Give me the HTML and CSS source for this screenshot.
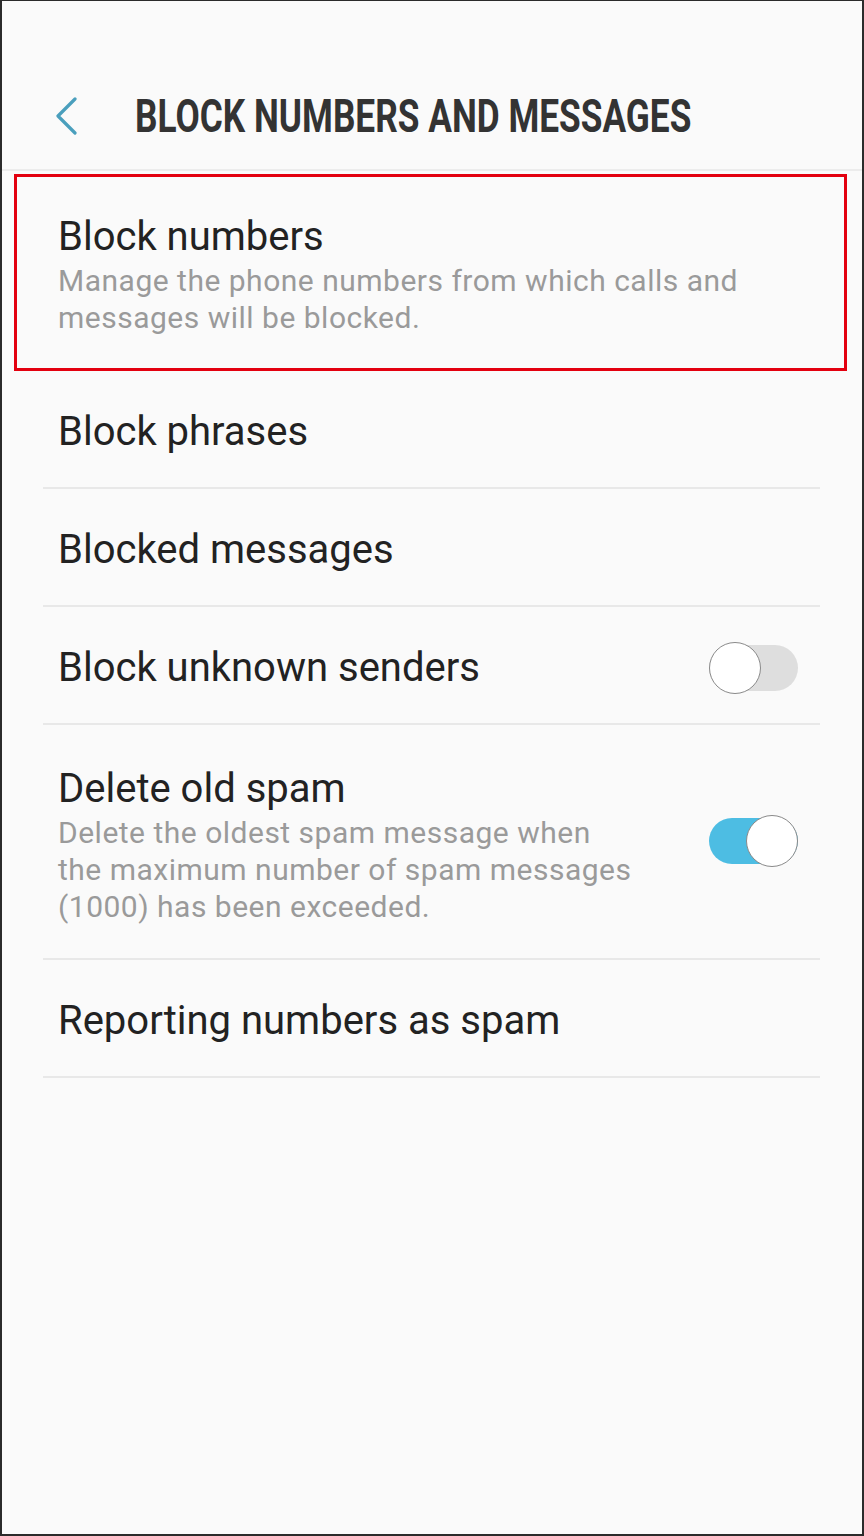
FILE: index.html
```html
<!DOCTYPE html>
<html lang="en">
<head>
  <meta charset="UTF-8">
  <meta name="viewport" content="width=device-width, initial-scale=1.0">
  <title>Block numbers and messages</title>
  <link rel="stylesheet" href="styles.css">
</head>
<body>
  <div class="screen">
    <div class="header">
      <span class="back">
        <svg width="24" height="38" viewBox="0 0 24 38">
          <polyline points="21,2 4,19 21,36" fill="none" stroke="#4a9fbd" stroke-width="3.2" stroke-linecap="round" stroke-linejoin="round"/>
        </svg>
      </span>
      <h1 class="title">BLOCK NUMBERS AND MESSAGES</h1>
    </div>

    <div class="highlight">
      <div class="item-title">Block numbers</div>
      <div class="item-sub">Manage the phone numbers from which calls and messages will be blocked.</div>
    </div>

    <ul class="list">
      <li class="item">
        <div class="item-title">Block phrases</div>
      </li>
      <li class="item">
        <div class="item-title">Blocked messages</div>
      </li>
      <li class="item">
        <div class="item-text">
          <div class="item-title">Block unknown senders</div>
        </div>
        <span class="switch"><span class="knob"></span></span>
      </li>
      <li class="item tall">
        <div class="item-text">
          <div class="item-title">Delete old spam</div>
          <div class="item-sub">Delete the oldest spam message when<br>the maximum number of spam messages (1000) has been exceeded.</div>
        </div>
        <span class="switch on"><span class="knob"></span></span>
      </li>
      <li class="item">
        <div class="item-title">Reporting numbers as spam</div>
      </li>
    </ul>
  </div>
</body>
</html>
```

FILE: styles.css
```css
*{
  margin: 0;
  padding: 0;
  box-sizing: border-box;
}
html,body{
  width: 100%;
  height: 100%;
}
body{
  background: #fafafa;
  font-family: Roboto, 'Noto Sans', sans-serif;
}
li{
  list-style: none;
}
.screen{
  height: 1536px;
  border: 2px solid #2b2b2b;
  border-top-width: 1px;
  background: #fafafa;
}
.header{
  height: 170px;
  display: flex;
  align-items: center;
  padding: 62px 0 0 52px;
  border-bottom: 2px solid #ececec;
}
.back{
  display: flex;
  width: 81px;
}
.title{
  font-family: Roboto, 'Noto Sans', sans-serif;
  font-weight: bold;
  font-size: 46px;
  color: #333;
  white-space: nowrap;
  transform: scaleX(0.766);
  transform-origin: left center;
}
.highlight{
  margin: 3px 15px 0 12px;
  border: 3px solid #e3000f;
  height: 197px;
  padding: 37px 0 0 41px;
}
.item-title{
  font-size: 40px;
  color: #222;
  line-height: 46px;
}
.item-sub{
  font-size: 30px;
  letter-spacing: 0.5px;
  color: #9a9a9a;
  line-height: 37px;
  margin-top: 2px;
}
.highlight .item-sub{
  width: 740px;
}
.list{
  margin: 0 42px 0 41px;
}
.item{
  height: 118px;
  display: flex;
  align-items: center;
  justify-content: space-between;
  padding: 6px 22px 0 15px;
  border-bottom: 2px solid #e8e8e8;
}
.item.tall{
  height: 235px;
  padding-top: 8px;
}
.tall .item-sub{
  width: 600px;
}
.switch{
  position: relative;
  width: 89px;
  height: 46px;
  border-radius: 23px;
  background: #dedede;
  flex-shrink: 0;
}
.switch .knob{
  position: absolute;
  top: -3px;
  left: 0;
  width: 52px;
  height: 52px;
  border-radius: 50%;
  background: #fff;
  border: 1.5px solid #8a8a8a;
}
.switch.on{
  background: #4dbde3;
  margin-bottom: 10px;
}
.switch.on .knob{
  left: auto;
  right: 0;
}
```
